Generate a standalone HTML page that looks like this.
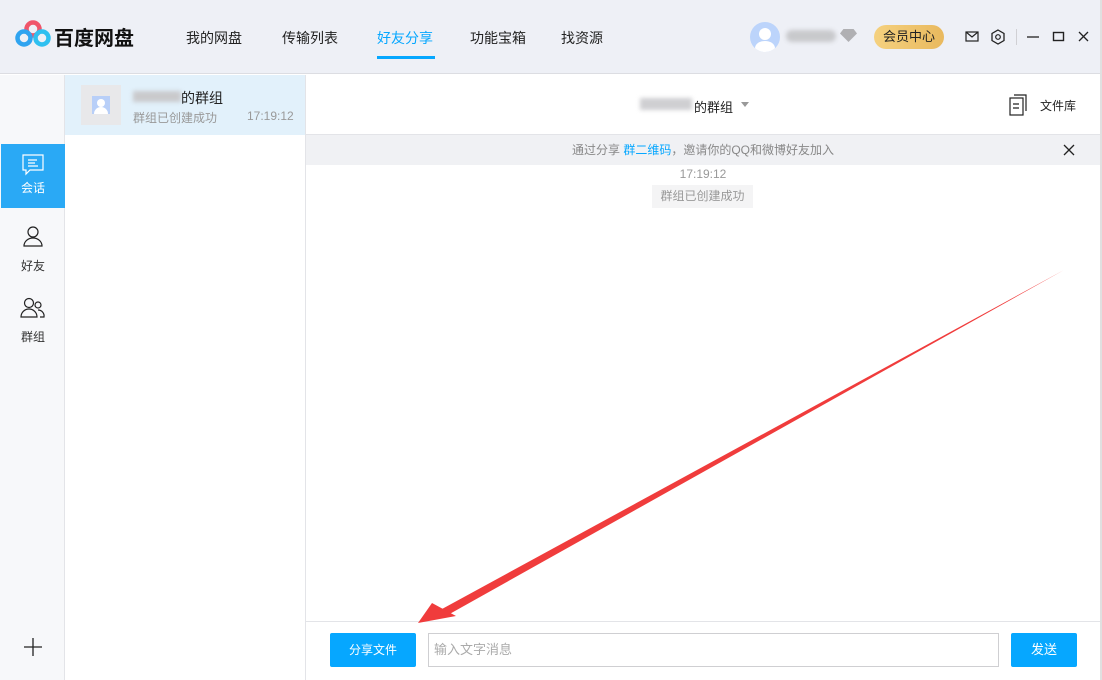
<!DOCTYPE html>
<html><head><meta charset="utf-8"><style>
*{margin:0;padding:0;box-sizing:border-box}
body{width:1102px;height:680px;overflow:hidden;position:relative;background:#fff;font-family:"Liberation Sans","Noto Sans CJK SC",sans-serif;font-size:13px;color:#333}
.a{position:absolute}
.nav{top:28px;font-size:14px;color:#222}
</style></head><body>
<div class="a" style="left:0;top:0;width:1102px;height:74px;background:#eef0f6;border-bottom:1px solid #dcdde2"></div>
<svg class="a" style="left:15px;top:20px" width="36" height="28" viewBox="0 0 36 28">
<circle cx="18" cy="9" r="6.5" fill="none" stroke="#f0556a" stroke-width="4.5"/>
<circle cx="9" cy="18" r="6.5" fill="none" stroke="#2fa4f0" stroke-width="4.5"/>
<circle cx="27" cy="18" r="6.5" fill="none" stroke="#2fc0f0" stroke-width="4.5"/>
</svg>
<div class="a" style="left:54px;top:22px;font-size:20px;font-weight:bold;color:#111">百度网盘</div>
<div class="a nav" style="left:186px">我的网盘</div>
<div class="a nav" style="left:282px">传输列表</div>
<div class="a nav" style="left:377px;color:#06a7ff">好友分享</div>
<div class="a" style="left:377px;top:56px;width:58px;height:3px;background:#06a7ff"></div>
<div class="a nav" style="left:470px">功能宝箱</div>
<div class="a nav" style="left:561px">找资源</div>
<div class="a" style="left:750px;top:22px;width:30px;height:30px;border-radius:50%;background:#bcd4fb;overflow:hidden"><div class="a" style="left:9px;top:6px;width:12px;height:12px;border-radius:50%;background:#fff"></div><div class="a" style="left:5px;top:19px;width:20px;height:14px;border-radius:50%;background:#fff"></div></div>
<div class="a" style="left:786px;top:30px;width:50px;height:12px;background:#c8c9cc;border-radius:6px;filter:blur(2px)"></div>
<div class="a" style="left:840px;top:29px;width:17px;height:13px;background:#b0b0b3;clip-path:polygon(20% 0,80% 0,100% 35%,50% 100%,0 35%)"></div>
<div class="a" style="left:874px;top:25px;width:70px;height:24px;border-radius:12px;background:linear-gradient(90deg,#f5d17f,#e9b95e);font-size:13px;text-align:center;line-height:24px;color:#222">会员中心</div>
<svg class="a" style="left:965px;top:29px" width="50" height="16"><rect x="1" y="3" width="12" height="9" fill="none" stroke="#222" stroke-width="1.2"/><path d="M1 3l6 5 6-5" fill="none" stroke="#222" stroke-width="1.2"/><path d="M33 1l6 3.5v7L33 15l-6-3.5v-7z" fill="none" stroke="#222" stroke-width="1.3"/><circle cx="33" cy="8" r="2.3" fill="none" stroke="#222" stroke-width="1.2"/></svg>
<div class="a" style="left:1016px;top:29px;width:1px;height:16px;background:#d0d0d4"></div>
<svg class="a" style="left:1026px;top:30px" width="66" height="14"><path d="M1 7h12" stroke="#222" stroke-width="1.3"/><rect x="27.5" y="2.5" width="10" height="8" fill="none" stroke="#222" stroke-width="1.4"/><path d="M53 2l9 9M62 2l-9 9" stroke="#222" stroke-width="1.3"/></svg>

<div class="a" style="left:0;top:75px;width:65px;height:605px;background:#f7f8fa;border-right:1px solid #e3e4e8"></div>
<div class="a" style="left:1px;top:144px;width:64px;height:64px;background:#2aa9f5;color:#fff;text-align:center">
<svg style="margin-top:10px" width="24" height="22" viewBox="0 0 24 22"><path d="M2 1h20v15H9l-4 4v-4H2z" fill="none" stroke="#fff" stroke-width="1.2"/><path d="M7 6h9M7 9h7M7 12h10" stroke="#fff" stroke-width="1.2"/></svg>
<div style="font-size:12px;margin-top:0px">会话</div></div>
<svg class="a" style="left:22px;top:225px" width="22" height="22"><circle cx="11" cy="7" r="5" fill="none" stroke="#222" stroke-width="1.2"/><path d="M2 21a9 8 0 0 1 18 0z" fill="none" stroke="#222" stroke-width="1.2"/></svg>
<div class="a" style="left:21px;top:257px;font-size:12px">好友</div>
<svg class="a" style="left:20px;top:297px" width="26" height="22"><circle cx="9" cy="6" r="4.5" fill="none" stroke="#222" stroke-width="1.2"/><path d="M1 20a8 8 0 0 1 16 0z" fill="none" stroke="#222" stroke-width="1.2"/><circle cx="18" cy="8" r="3" fill="none" stroke="#222" stroke-width="1.2"/><path d="M18 13a6 6 0 0 1 6 7h-4" fill="none" stroke="#222" stroke-width="1.2"/></svg>
<div class="a" style="left:21px;top:328px;font-size:12px">群组</div>
<svg class="a" style="left:23px;top:637px" width="20" height="20"><path d="M10 1v18M1 10h18" stroke="#222" stroke-width="1.3"/></svg>

<div class="a" style="left:65px;top:75px;width:240px;height:60px;background:#e2f1fb"></div>
<div class="a" style="left:305px;top:75px;width:1px;height:605px;background:#e3e4e8"></div>
<div class="a" style="left:81px;top:85px;width:40px;height:40px;background:#e8e8ea"></div>
<div class="a" style="left:92px;top:96px;width:18px;height:18px;background:#b8cff8"><div class="a" style="left:5px;top:3px;width:8px;height:8px;border-radius:50%;background:#fff"></div><div class="a" style="left:2px;top:11px;width:14px;height:7px;border-radius:7px 7px 0 0;background:#fff"></div></div>
<div class="a" style="left:133px;top:91px;width:48px;height:11px;background:#c9c9cc;filter:blur(2px)"></div>
<div class="a" style="left:181px;top:88px;font-size:14px;color:#222">的群组</div>
<div class="a" style="left:133px;top:109px;font-size:12px;color:#999">群组已创建成功</div>
<div class="a" style="left:247px;top:109px;font-size:12px;color:#999">17:19:12</div>

<div class="a" style="left:306px;top:134px;width:794px;height:1px;background:#e3e4e8"></div>
<div class="a" style="left:640px;top:98px;width:52px;height:12px;background:#cfcfd2;filter:blur(2px)"></div>
<div class="a" style="left:694px;top:97px;font-size:13px;color:#222">的群组</div>
<div class="a" style="left:741px;top:102px;border:4px solid transparent;border-top:5px solid #999"></div>
<svg class="a" style="left:1009px;top:94px" width="20" height="22"><rect x="1" y="4" width="13" height="17" fill="none" stroke="#222" stroke-width="1.2"/><path d="M5 1h12v16" fill="none" stroke="#222" stroke-width="1.2"/><path d="M4 10h6M4 14h6" stroke="#222" stroke-width="1.2"/></svg>
<div class="a" style="left:1040px;top:97px;font-size:12px;color:#222">文件库</div>
<div class="a" style="left:306px;top:135px;width:794px;height:30px;background:#f0f1f4;text-align:center;line-height:30px;font-size:12px;color:#888">通过分享 <span style="color:#06a7ff">群二维码</span>，邀请你的QQ和微博好友加入</div>
<svg class="a" style="left:1063px;top:144px" width="12" height="12"><path d="M1 1l10 10M11 1L1 11" stroke="#222" stroke-width="1.3"/></svg>
<div class="a" style="left:306px;top:167px;width:794px;text-align:center;font-size:12px;color:#999">17:19:12</div>
<div class="a" style="left:652px;top:185px;width:101px;height:23px;background:#f4f4f5;text-align:center;line-height:23px;font-size:12px;color:#999">群组已创建成功</div>

<div class="a" style="left:306px;top:621px;width:794px;height:1px;background:#e3e4e8"></div>
<div class="a" style="left:330px;top:633px;width:86px;height:34px;background:#06a7ff;border-radius:2px;color:#fff;text-align:center;line-height:34px;font-size:12px">分享文件</div>
<div class="a" style="left:428px;top:633px;width:571px;height:34px;border:1px solid #cfcfd2;color:#aaa;line-height:32px;padding-left:5px;font-size:13px">输入文字消息</div>
<div class="a" style="left:1011px;top:633px;width:66px;height:34px;background:#06a7ff;border-radius:2px;color:#fff;text-align:center;line-height:34px;font-size:13px">发送</div>
<div class="a" style="left:1100px;top:0;width:2px;height:680px;background:#e0e0e0"></div>

<svg class="a" style="left:0;top:0" width="1102" height="680"><polygon points="1064,270 442,609 446,616" fill="#f03c3c"/><polygon points="418,623 432,603 456,616" fill="#f03c3c"/></svg>
</body></html>
